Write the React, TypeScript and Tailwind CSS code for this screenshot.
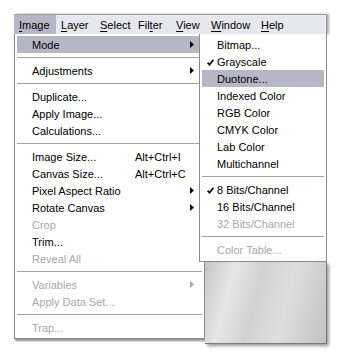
type Item =
  | { sep: true }
  | {
      sep?: false
      label: string
      shortcut?: string
      sub?: boolean
      disabled?: boolean
      active?: boolean
      checked?: boolean
    }

const mainItems: Item[] = [
  { label: 'Mode', sub: true, active: true },
  { sep: true },
  { label: 'Adjustments', sub: true },
  { sep: true },
  { label: 'Duplicate...' },
  { label: 'Apply Image...' },
  { label: 'Calculations...' },
  { sep: true },
  { label: 'Image Size...', shortcut: 'Alt+Ctrl+I' },
  { label: 'Canvas Size...', shortcut: 'Alt+Ctrl+C' },
  { label: 'Pixel Aspect Ratio', sub: true },
  { label: 'Rotate Canvas', sub: true },
  { label: 'Crop', disabled: true },
  { label: 'Trim...' },
  { label: 'Reveal All', disabled: true },
  { sep: true },
  { label: 'Variables', sub: true, disabled: true },
  { label: 'Apply Data Set...', disabled: true },
  { sep: true },
  { label: 'Trap...', disabled: true },
]

const modeItems: Item[] = [
  { label: 'Bitmap...' },
  { label: 'Grayscale', checked: true },
  { label: 'Duotone...', active: true },
  { label: 'Indexed Color' },
  { label: 'RGB Color' },
  { label: 'CMYK Color' },
  { label: 'Lab Color' },
  { label: 'Multichannel' },
  { sep: true },
  { label: '8 Bits/Channel', checked: true },
  { label: '16 Bits/Channel' },
  { label: '32 Bits/Channel', disabled: true },
  { sep: true },
  { label: 'Color Table...', disabled: true },
]

function Arrow({ disabled }: { disabled?: boolean }) {
  return (
    <svg width="4" height="7" viewBox="0 0 4 7" className="shrink-0">
      <polygon points="0,0 4,3.5 0,7" fill={disabled ? '#a8a8a8' : '#000'} />
    </svg>
  )
}

function Check() {
  return (
    <svg width="7" height="7" viewBox="0 0 7 7">
      <path d="M0.6 3.6 L2.6 5.8 L6.4 0.8" stroke="#000" strokeWidth="1.6" fill="none" />
    </svg>
  )
}

function Separator() {
  return (
    <div className="h-[9px] pt-[4px]">
      <div className="h-px bg-[#a4a4a4]" />
    </div>
  )
}

function Row({ item, main }: { item: Exclude<Item, { sep: true }>; main?: boolean }) {
  return (
    <div
      className={`flex h-[17px] items-center pt-[2px] pr-[8px] ${item.active ? 'bg-[#b6b6c6]' : ''} ${
        item.disabled ? 'text-[#a8a8a8]' : 'text-black'
      }`}
    >
      <span className="flex w-[15px] shrink-0 justify-center pl-[2px]">
        {item.checked && <Check />}
      </span>
      <span className={main ? 'w-[103px] shrink-0 whitespace-nowrap' : 'whitespace-nowrap'}>
        {item.label}
      </span>
      {item.shortcut && <span className="whitespace-nowrap">{item.shortcut}</span>}
      {item.sub && (
        <span className="ml-auto -mt-[2px]">
          <Arrow disabled={item.disabled} />
        </span>
      )}
    </div>
  )
}

const barItems = [
  { pre: 'I', rest: 'mage', w: 'w-[42px]', active: true },
  { pre: 'L', rest: 'ayer', w: 'w-[39px]' },
  { pre: 'S', rest: 'elect', w: 'w-[38px]' },
  { pre: 'Fil', u: 't', rest: 'er', w: 'w-[38px]' },
  { pre: 'V', rest: 'iew', w: 'w-[35px]' },
  { pre: 'W', rest: 'indow', w: 'w-[50px]' },
  { pre: 'H', rest: 'elp', w: 'w-[40px]' },
]

export default function App() {
  return (
    <div
      className="h-[356px] w-[341px] bg-white pl-[14px] pt-[14px] text-[11px] leading-none"
      style={{ fontFamily: '"Liberation Sans", Arial, sans-serif' }}
    >
      <div className="w-[313px]">
        {/* menu bar */}
        <div className="flex h-[20px] border-t border-r border-[#9c9c9c] bg-[#e7e7ef] shadow-[2px_0_2px_rgba(0,0,0,0.35)]">
          {barItems.map((b) => (
            <div
              key={b.pre + b.rest}
              className={`flex h-full items-center pt-[1px] pl-[5px] ${b.w} ${b.active ? 'bg-[#b6b6c6]' : ''}`}
            >
              {b.u ? (
                <span>
                  {b.pre}
                  <span className="underline underline-offset-2">{b.u}</span>
                  {b.rest}
                </span>
              ) : (
                <span>
                  <span className="underline underline-offset-2">{b.pre}</span>
                  {b.rest}
                </span>
              )}
            </div>
          ))}
        </div>

        <div className="flex items-start">
          {/* Image menu */}
          <div className="w-[191px] shrink-0 border-l border-r border-b border-[#8c8c8c] bg-white px-[2px] pt-[2px] pb-[2px] shadow-[1px_2px_2px_rgba(0,0,0,0.45)]">
            {mainItems.map((it, i) =>
              it.sep ? <Separator key={i} /> : <Row key={i} item={it} main />,
            )}
          </div>

          {/* Mode submenu + canvas behind */}
          <div className="relative z-10 -ml-[6px] flex w-[128px] flex-col">
            <div className="border border-t-0 border-[#8c8c8c] bg-white px-[2px] pt-[2px] pb-[3px]">
              {modeItems.map((it, i) =>
                it.sep ? <Separator key={i} /> : <Row key={i} item={it} />,
              )}
            </div>
            <div className="ml-[6px] h-[82px] border-r border-b border-[#7a7a7a] bg-[linear-gradient(105deg,#c6c6c6_0%,#e6e6e6_22%,#d2d2d2_42%,#dedede_65%,#c2c2c2_100%)] shadow-[2px_2px_3px_rgba(0,0,0,0.4)]" />
          </div>
        </div>
      </div>
    </div>
  )
}
